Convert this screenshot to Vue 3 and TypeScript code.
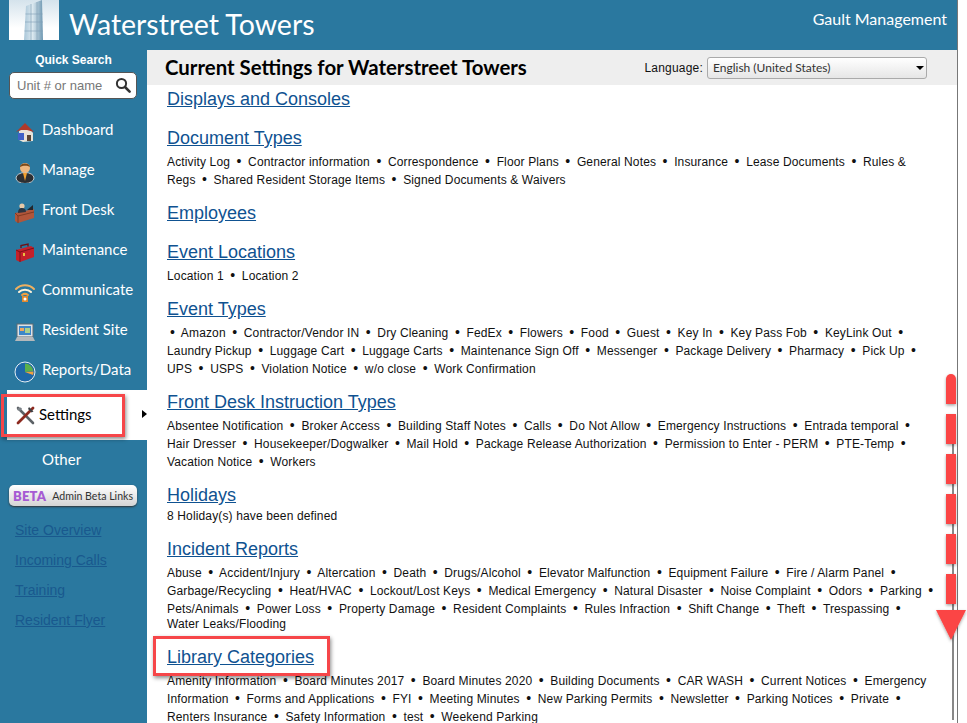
<script setup lang="ts">
interface Section { title: string; items: string[] }
const sections: Section[] = [
  { title: 'Displays and Consoles', items: [] },
  { title: 'Document Types', items: ['Activity Log', 'Contractor information', 'Correspondence', 'Floor Plans', 'General Notes', 'Insurance', 'Lease Documents', 'Rules & Regs', 'Shared Resident Storage Items', 'Signed Documents & Waivers'] },
  { title: 'Employees', items: [] },
  { title: 'Event Locations', items: ['Location 1', 'Location 2'] },
  { title: 'Event Types', items: ['', 'Amazon', 'Contractor/Vendor IN', 'Dry Cleaning', 'FedEx', 'Flowers', 'Food', 'Guest', 'Key In', 'Key Pass Fob', 'KeyLink Out', 'Laundry Pickup', 'Luggage Cart', 'Luggage Carts', 'Maintenance Sign Off', 'Messenger', 'Package Delivery', 'Pharmacy', 'Pick Up', 'UPS', 'USPS', 'Violation Notice', 'w/o close', 'Work Confirmation'] },
  { title: 'Front Desk Instruction Types', items: ['Absentee Notification', 'Broker Access', 'Building Staff Notes', 'Calls', 'Do Not Allow', 'Emergency Instructions', 'Entrada temporal', 'Hair\u00a0Dresser', 'Housekeeper/Dogwalker', 'Mail Hold', 'Package Release Authorization', 'Permission to Enter - PERM', 'PTE-Temp', 'Vacation Notice', 'Workers'] },
  { title: 'Holidays', items: ['8 Holiday(s) have been defined'] },
  { title: 'Incident Reports', items: ['Abuse', 'Accident/Injury', 'Altercation', 'Death', 'Drugs/Alcohol', 'Elevator Malfunction', 'Equipment Failure', 'Fire / Alarm Panel', 'Garbage/Recycling', 'Heat/HVAC', 'Lockout/Lost Keys', 'Medical Emergency', 'Natural Disaster', 'Noise Complaint', 'Odors', 'Parking', 'Pets/Animals', 'Power Loss', 'Property Damage', 'Resident Complaints', 'Rules Infraction', 'Shift Change', 'Theft', 'Trespassing', 'Water\u00a0Leaks/Flooding'] },
  { title: 'Library Categories', items: ['Amenity Information', 'Board Minutes 2017', 'Board Minutes 2020', 'Building Documents', 'CAR WASH', 'Current Notices', 'Emergency Information', 'Forms and Applications', 'FYI', 'Meeting Minutes', 'New Parking Permits', 'Newsletter', 'Parking Notices', 'Private', 'Renters Insurance', 'Safety Information', 'test', 'Weekend Parking'] },
]
const nav = ['Dashboard', 'Manage', 'Front Desk', 'Maintenance', 'Communicate', 'Resident Site', 'Reports/Data']
const links = ['Site Overview', 'Incoming Calls', 'Training', 'Resident Flyer']
const dashes = [414, 454, 494, 534, 574]
</script>

<template>
  <div class="page">
    <div class="app">
      <header class="top">
        <svg class="logo" width="50" height="40" viewBox="0 0 50 40">
          <defs>
            <linearGradient id="sky" x1="0" y1="0" x2="0" y2="1">
              <stop offset="0" stop-color="#d5e3ec" />
              <stop offset=".7" stop-color="#ffffff" />
            </linearGradient>
            <linearGradient id="tower" x1="0" y1="0" x2="1" y2="0">
              <stop offset="0" stop-color="#a9c6d8" />
              <stop offset=".45" stop-color="#dce9f0" />
              <stop offset="1" stop-color="#6f98b2" />
            </linearGradient>
          </defs>
          <rect width="50" height="40" fill="url(#sky)" />
          <path d="M15 40L17 6L33 0L34 40Z" fill="url(#tower)" />
          <path d="M22 40V4M28 40V2M16.500 14H33.500M16 22H34M15.500 31H34" stroke="#7f9fb5" stroke-width=".6" />
        </svg>
        <div class="brand">Waterstreet Towers</div>
        <div class="company">Gault Management</div>
      </header>

      <div class="body">
        <aside class="side">
          <div class="qs-label">Quick Search</div>
          <div class="qs-box">
            <input class="qs-input" placeholder="Unit # or name" />
            <svg width="16" height="16" viewBox="0 0 16 16" class="qs-icon">
              <circle cx="6.5" cy="6.5" r="4.6" fill="none" stroke="#333" stroke-width="2" />
              <path d="M10 10l4.6 4.6" stroke="#333" stroke-width="2.6" stroke-linecap="round" />
            </svg>
          </div>

          <nav class="nav">
            <a v-for="(n, i) in nav" :key="n" class="nav-item">
              <svg class="nav-icon" width="22" height="22" viewBox="0 0 22 22">
                <g v-if="i === 0">
                  <path d="M5 10L13 5L19 12V20L9 21L5 19Z" fill="#e8e4da" />
                  <path d="M2 11L11 2L20 11L13 9L7 9Z" fill="#b0392a" />
                  <rect x="4" y="12" width="6" height="7" fill="#3f62c8" />
                  <path d="M13 20v-6h4v6z" fill="#5a4636" />
                </g>
                <g v-else-if="i === 1">
                  <ellipse cx="11" cy="17" rx="9" ry="5.5" fill="#2c2f33" stroke="#dfe3e6" stroke-width=".8" />
                  <circle cx="11" cy="7" r="5" fill="#eeb77f" />
                  <path d="M6 6c0-4 9-5 10 0c-3-2-7-1.500-10 0z" fill="#7a4a1c" />
                  <path d="M9 12h4l-2 8z" fill="#f0a030" />
                </g>
                <g v-else-if="i === 2">
                  <path d="M1 12L20 8V17L4 22L1 20Z" fill="#b2563a" />
                  <path d="M4 15V22M1 12l3 3L20 11" stroke="#7f3a22" fill="none" />
                  <circle cx="8" cy="5" r="2.600" fill="#e6c9a8" />
                  <path d="M4 12c0-4 2-5 4-5s4 1 4 4z" fill="#2c3440" />
                  <path d="M13 9l6-5v5z" fill="#22262c" />
                </g>
                <g v-else-if="i === 3">
                  <path d="M2 9L17 5L20 7V16L6 21L2 19Z" fill="#c4202a" />
                  <path d="M2 9L6 11V21M6 11L20 7" stroke="#7b1018" fill="none" />
                  <path d="M7 7V4.500L14 3V5.500" stroke="#6e1016" stroke-width="1.400" fill="none" />
                  <rect x="9" y="12" width="2" height="3" fill="#e8c040" />
                </g>
                <g v-else-if="i === 4" fill="none" stroke-linecap="round">
                  <path d="M2 8c5-5 13-5 18 0" stroke="#f0b060" stroke-width="2" />
                  <path d="M5 11c3-3 9-3 12 0" stroke="#fff2d8" stroke-width="2" />
                  <path d="M8 14c2-1.500 4-1.500 6 0" stroke="#f0a040" stroke-width="2" />
                  <path d="M8 15h6v6H8z" fill="#e08a30" stroke="none" />
                  <circle cx="11" cy="18" r="1.500" fill="#fff" stroke="none" />
                </g>
                <g v-else-if="i === 5">
                  <rect x="3" y="3" width="16" height="13" fill="#dde2e6" stroke="#5e6a72" />
                  <rect x="5" y="5" width="12" height="9" fill="#3d87c8" />
                  <rect x="6" y="7" width="4" height="3" fill="#f0a860" />
                  <rect x="11" y="7" width="5" height="5" fill="#a9d08e" />
                  <path d="M3 16H19L21 20H1Z" fill="#b5b8ba" />
                </g>
                <g v-else>
                  <circle cx="11" cy="11" r="10" fill="#1e68a8" stroke="#e6eef4" stroke-width="1" />
                  <path d="M11 11V2.500A8.500 8.500 0 0 1 19.400 10Z" fill="#5bb04c" />
                  <path d="M11 11L19.500 10.500A8.500 8.500 0 0 1 19 14Z" fill="#f0a040" />
                </g>
              </svg>
              <span>{{ n }}</span>
            </a>
            <a class="nav-active">
              <svg class="active-icon" width="21" height="21" viewBox="0 0 21 21">
                <path d="M3 3L18 18" stroke="#5c6166" stroke-width="2.600" stroke-linecap="round" />
                <path d="M18 3L3 18" stroke="#8d2a20" stroke-width="2.800" stroke-linecap="round" />
                <path d="M14 2l4.500 4.500-2 1-3.500-3.500z" fill="#3d4044" />
                <path d="M2 5c1-3 4-3 5-1L5 6z" fill="#7c8288" />
              </svg>
              <span>Settings</span>
              <i class="caret"></i>
            </a>
            <a class="nav-item nav-other"><span>Other</span></a>
          </nav>

          <button class="beta"><b>BETA</b><span>Admin Beta Links</span></button>

          <div class="side-links">
            <a v-for="l in links" :key="l" href="#">{{ l }}</a>
          </div>
        </aside>

        <main class="content">
          <div class="title-bar">
            <h1>Current Settings for Waterstreet Towers</h1>
            <label class="lang">
              <span>Language:</span>
              <span class="select-wrap">
                <select>
                  <option>English (United States)</option>
                </select>
                <i class="sel-arrow"></i>
              </span>
            </label>
          </div>
          <div class="sections">
            <section v-for="s in sections" :key="s.title" class="section">
              <h2><a href="#">{{ s.title }}</a></h2>
              <p v-if="s.items.length" class="items">
                <template v-for="(it, i) in s.items" :key="i">{{ it }}<template v-if="i < s.items.length - 1"><span class="dot" :class="{ lead: !it }">•</span>{{ ' ' }}</template></template>
              </p>
            </section>
          </div>
        </main>
      </div>
    </div>

    <div class="mark mark-settings"></div>
    <div class="mark mark-library"></div>
    <div class="track"></div>
    <svg class="arrow" width="40" height="280" viewBox="0 0 40 280">
      <defs>
        <filter id="sh" x="-30%" y="-10%" width="160%" height="120%">
          <feDropShadow dx="0" dy="1.500" stdDeviation="1.500" flood-color="#000" flood-opacity=".35" />
        </filter>
      </defs>
      <g fill="#fb4444" filter="url(#sh)">
        <path d="M11 30V5a5 5 0 0 1 10 0V30Z" />
        <rect v-for="y in dashes" :key="y" x="11" :y="y - 374" width="10" height="30" />
        <path d="M1 236H31L16 266Z" />
      </g>
    </svg>
  </div>
</template>

<style>
html, body { margin: 0; overflow: hidden; background: #fff; }
</style>

<style scoped>
.page {
  position: relative;
  width: 967px;
  height: 723px;
  overflow: hidden;
  background: #fff;
  font-family: "Liberation Sans", Arial, sans-serif;
}
.app {
  width: 957px;
  height: 723px;
  border-right: 1px solid #777;
  background: #2a789f;
}
.top {
  height: 50px;
  display: flex;
  align-items: flex-start;
  color: #fff;
}
.logo { margin-left: 9px; flex: none; }
.brand {
  margin-left: 10px;
  font: 400 28.5px/48px Lato, sans-serif;
}
.company {
  margin-left: auto;
  margin-right: 10px;
  font: 400 16px/37px Lato, sans-serif;
}
.body { display: flex; height: 673px; }
.side { width: 147px; flex: none; display: flex; flex-direction: column; }
.qs-label {
  margin-top: 3px;
  text-align: center;
  font: 700 12px/14px "Liberation Sans", sans-serif;
  color: #fff;
  width: 147px;
}
.qs-box {
  position: relative;
  box-sizing: border-box;
  width: 128px;
  height: 27px;
  margin: 5px 0 0 9px;
  background: #fff;
  border: 1px solid #555;
  border-radius: 5px;
}
.qs-input {
  border: 0;
  outline: 0;
  background: transparent;
  width: 96px;
  height: 25px;
  padding: 0 0 0 7px;
  font: 13px "Liberation Sans", sans-serif;
  color: #333;
}
.qs-input::placeholder { color: #777; opacity: 1; }
.qs-icon { position: absolute; right: 5px; top: 4px; }
.nav { margin-top: 11px; display: flex; flex-direction: column; }
.nav-item {
  height: 40px;
  display: flex;
  align-items: center;
  padding-left: 14px;
  color: #fff;
  font: 400 15px Lato, sans-serif;
}
.nav-item span, .nav-active span { margin-bottom: 2px; }
.nav-icon { flex: none; width: 22px; margin: 3px 6px 0 0; }
.nav-other { padding-left: 42px; }
.nav-active {
  position: relative;
  height: 50px;
  margin-left: 7px;
  display: flex;
  align-items: center;
  padding-left: 8px;
  background: #fff;
  color: #000;
  font: 400 15px Lato, sans-serif;
}
.active-icon { margin-right: 3px; flex: none; }
.caret {
  position: absolute;
  right: 0;
  top: 20px;
  border-left: 5px solid #000;
  border-top: 4px solid transparent;
  border-bottom: 4px solid transparent;
}
.beta {
  box-sizing: border-box;
  width: 128px;
  height: 21px;
  margin: 5px 0 0 9px;
  padding: 0 0 0 4px;
  border: 0;
  border-radius: 5px;
  display: flex;
  align-items: center;
  gap: 6px;
  white-space: nowrap;
  background: linear-gradient(#fff, #d4d4d4);
  box-shadow: 0 1px 2px #333;
  color: #333;
  font: 400 10.6px Lato, sans-serif;
}
.beta b { font: 800 13px Lato, sans-serif; color: #a65bd3; letter-spacing: .2px; }
.side-links { margin-top: 9px; display: flex; flex-direction: column; }
.side-links a {
  height: 30px;
  line-height: 30px;
  padding-left: 15px;
  font-size: 14px;
  color: #19598e;
}
.content { flex: 1; min-width: 0; background: #fff; }
.title-bar {
  height: 35px;
  display: flex;
  align-items: center;
  background: #eee;
  padding-left: 18px;
}
.title-bar h1 {
  margin: 0 0 2px;
  font: 700 20.4px Lato, sans-serif;
  color: #000;
}
.lang {
  margin-left: auto;
  margin-right: 30px;
  display: flex;
  align-items: center;
  gap: 4px;
  font-size: 12px;
  letter-spacing: .2px;
  color: #111;
}
.select-wrap { position: relative; display: block; }
.select-wrap select {
  appearance: none;
  display: block;
  box-sizing: border-box;
  width: 220px;
  height: 22px;
  padding: 0 0 0 5px;
  border: 1px solid #aaa;
  border-radius: 3px;
  background: linear-gradient(#fff, #e6e6e6);
  font: 400 12px Lato, sans-serif;
  color: #333;
}
.sel-arrow {
  position: absolute;
  right: 3px;
  top: 9px;
  border-top: 4px solid #000;
  border-left: 4.500px solid transparent;
  border-right: 4.500px solid transparent;
}
.sections { padding: 4px 17px 0 20px; }
.section { padding-bottom: 15.5px; }
.section h2 { margin: 0 0 2.5px; font: 400 18px/21px "Liberation Sans", sans-serif; }
.section h2 a { color: #0f5291; }
.items { margin: 0; font-size: 12px; line-height: 15px; letter-spacing: .14px; color: #111; }
.dot {
  font-size: 14px;
  line-height: 18px;
  margin: 0 3px 0 6.500px;
}
.dot.lead { margin-left: 3px; }
.mark {
  position: absolute;
  box-sizing: border-box;
  border: 3px solid #f64649;
  box-shadow: 1px 2px 4px rgba(0, 0, 0, .45);
  pointer-events: none;
}
.mark-settings { left: 1px; top: 394px; width: 124px; height: 43px; }
.mark-library { left: 153px; top: 636px; width: 177px; height: 40px; }
.track {
  position: absolute;
  left: 952px;
  top: 440px;
  width: 2px;
  height: 280px;
  background: #888;
}
.arrow { position: absolute; left: 935px; top: 374px; overflow: visible; }
</style>
